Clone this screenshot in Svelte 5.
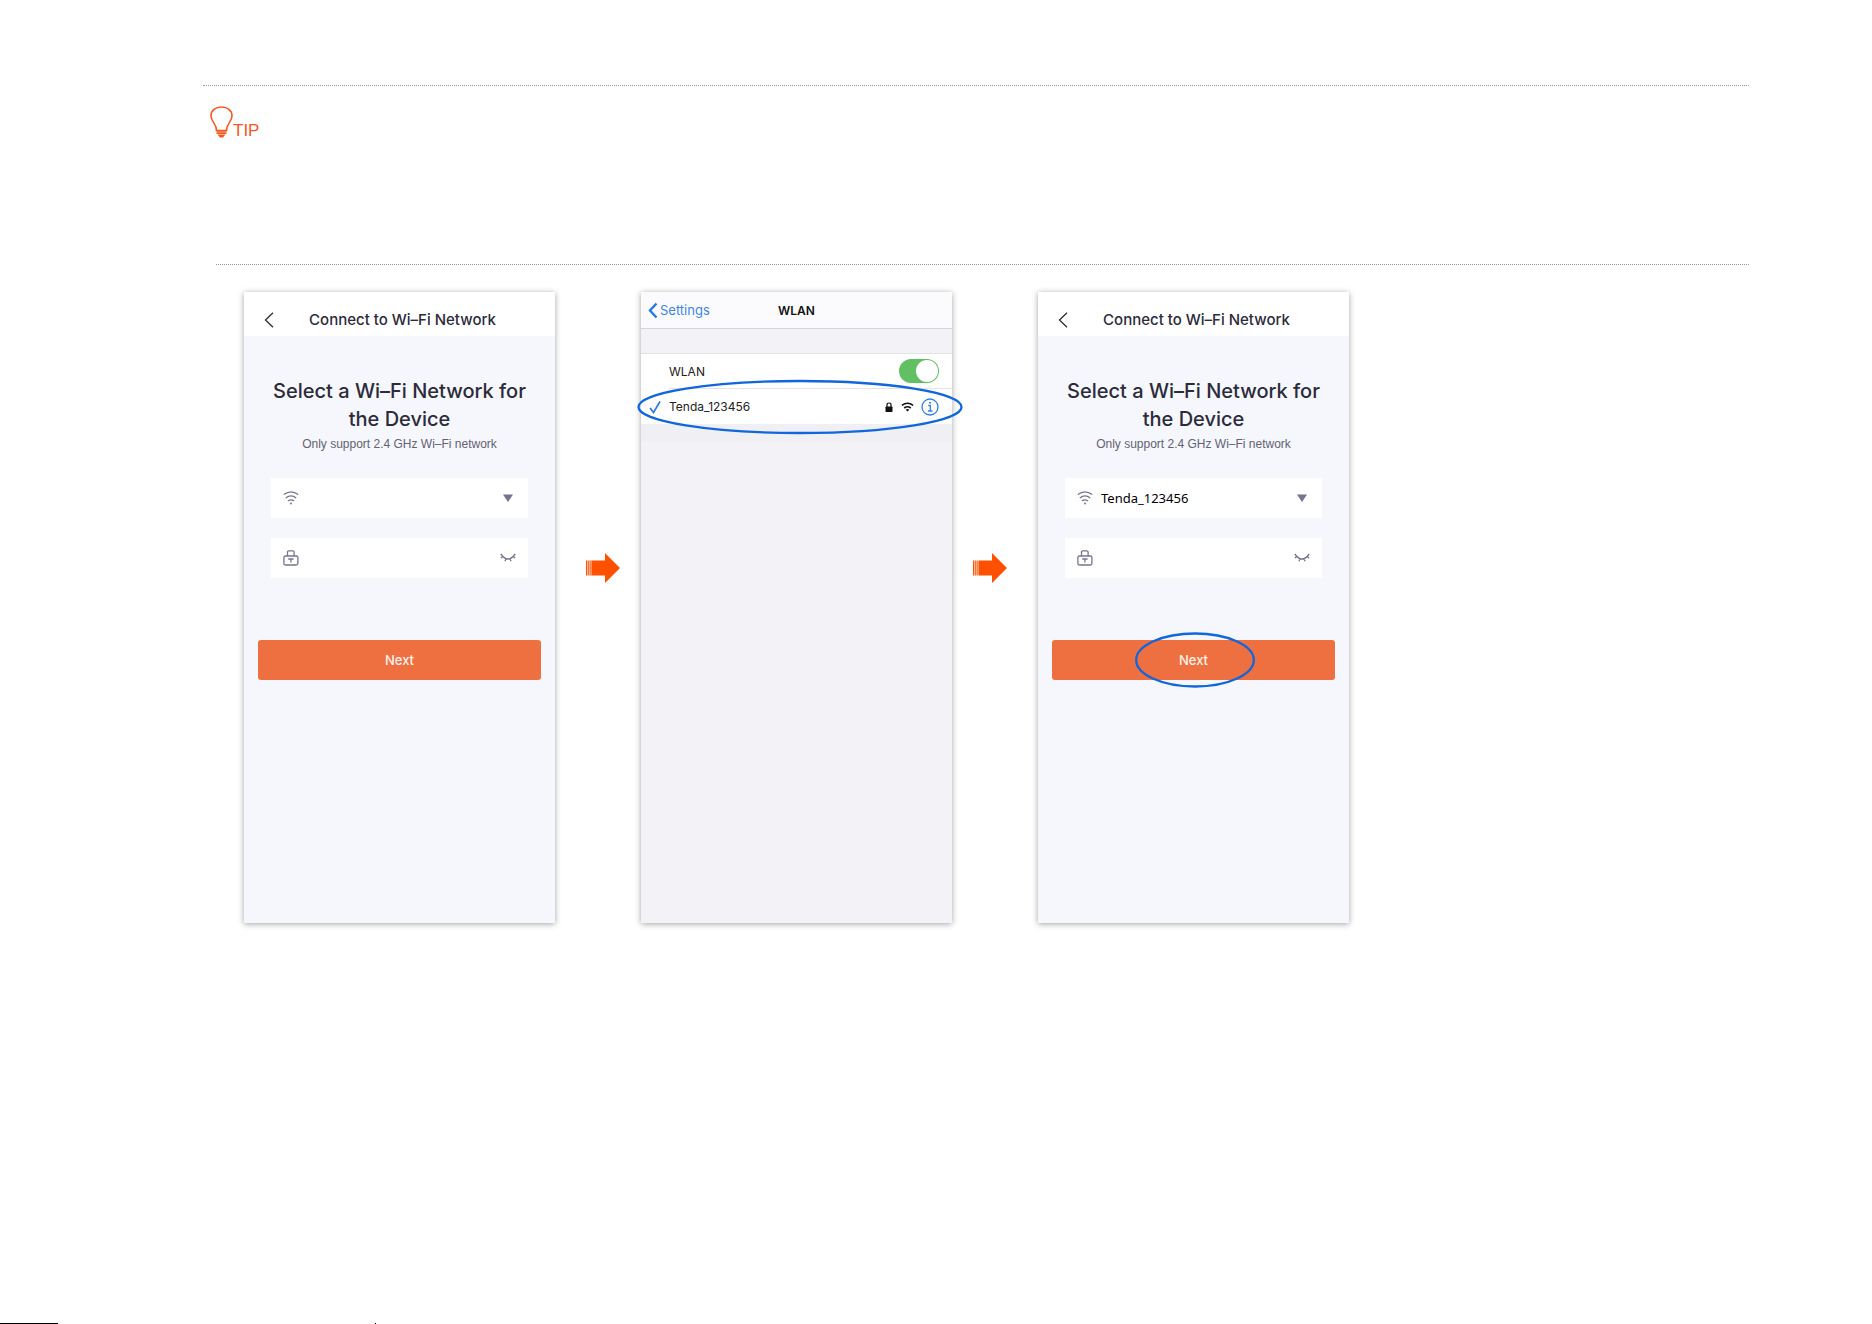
<script>
	let screens = [
		{ id: 'before', network: '', password: '', marked: false },
		{ id: 'after', network: 'Tenda_123456', password: '', marked: true }
	];
	let wlan = true;
	let connected = 'Tenda_123456';
</script>

{#snippet phone(screen)}
	<form class="phone" on:submit|preventDefault>
		<header class="bar">
			<button class="back" type="button" aria-label="Back">
				<svg width="10" height="16" viewBox="0 0 10 16"><path d="M9 .8 1.5 8 9 15.2" /></svg>
			</button>
			<h2>Connect to Wi–Fi Network</h2>
		</header>
		<h1>Select a Wi–Fi Network for the Device</h1>
		<p class="hint">Only support 2.4 GHz Wi–Fi network</p>

		<div class="field">
			<label for="network-{screen.id}" aria-label="Wi-Fi network">
				<svg class="line" width="16" height="16" viewBox="0 0 16 16">
					<path d="M.8 4.6Q8-.8 15.2 4.6M2.8 8Q8 3.6 13.2 8M5 11Q8 8.6 11 11" />
					<circle class="dot" cx="8" cy="13.6" r="1" />
				</svg>
			</label>
			<select id="network-{screen.id}" bind:value={screen.network}>
				<option value={screen.network}>{screen.network}</option>
			</select>
			<svg class="caret" width="10" height="8" viewBox="0 0 10 8"><path d="M0 .5h10L5 8z" /></svg>
		</div>

		<div class="field">
			<label for="password-{screen.id}" aria-label="Password">
				<svg class="line" width="16" height="16" viewBox="0 0 16 16">
					<rect x=".9" y="6" width="14" height="9" rx="1.5" />
					<path d="M4.5 6V2Q4.5.8 5.7.8h4.2q1.2 0 1.2 1.2v4M5.2 9h5.400M7.900 9v3.600" />
				</svg>
			</label>
			<input id="password-{screen.id}" type="password" bind:value={screen.password} />
			<button class="eye" type="button" aria-label="Show password">
				<svg class="line" width="16" height="10" viewBox="0 0 16 10">
					<path d="M.8 1Q8 11 15.2 1M2.8 3.6.8 5M5.9 5.8 5 8.2M10.1 5.8l.9 2.4M13.2 3.6l2 1.4" />
				</svg>
			</button>
		</div>

		<div class="action">
			<button class="next" type="submit">Next</button>
			{#if screen.marked}
				<svg class="mark next-mark" width="120" height="56" viewBox="0 0 120 56"><ellipse cx="60" cy="28" rx="58.8" ry="26.5" /></svg>
			{/if}
		</div>
	</form>
{/snippet}

{#snippet arrow()}
	<svg width="34" height="30" viewBox="0 0 34 30">
		<path d="M0 7.5h1v15H0zM1.600 7.500h1.200v15H1.600zM3.500 7.500h1.200v15H3.500zM5.400 7.500H19V0l15 15-15 15v-7.500H5.400z" />
	</svg>
{/snippet}

<main>
	<section class="tip">
		<svg width="23" height="32" viewBox="0 0 23 32">
			<path class="glass" d="M6.5 24.5C6.5 17.5 1 16 1 9.8 1 4.5 5.6 1 11.5 1S22 4.5 22 9.8c0 6.2-5.5 7.7-5.5 14.7z" />
			<path class="base" d="M6.5 24h10v1.8h-10zM6.500 26.200h10v1.800h-10zM7.500 28.400h8l-2.500 3.100h-3z" />
		</svg>
		<span>TIP</span>
	</section>

	<div class="steps">
		{@render phone(screens[0])}
		<div class="arrow to-end">{@render arrow()}</div>

		<section class="phone ios">
			<header class="nav">
				<a href="#settings">
					<svg width="10" height="17" viewBox="0 0 10 17"><path d="M8.5 1.5 2 8.5l6.500 7" /></svg>
					Settings
				</a>
				<h2>WLAN</h2>
			</header>
			<div class="list">
				<label class="row">
					<span>WLAN</span>
					<input class="switch" type="checkbox" bind:checked={wlan} />
				</label>
				<div class="row network">
					<svg class="check" width="12" height="14" viewBox="0 0 12 14"><path d="m1 8 3.500 4.500L11 1.500" /></svg>
					<span>{connected}</span>
					<svg class="lock" width="8" height="10" viewBox="0 0 8 10">
						<path class="shackle" d="M2 5V3q0-2 2-2t2 2v2" />
						<rect x=".5" y="4.5" width="7" height="5.5" rx=".8" />
					</svg>
					<svg class="wifi" width="13" height="10" viewBox="0 0 13 10">
						<path d="M.9 3.4Q6.500-1 12.100 3.400M3.200 6Q6.500 3.400 9.800 6" />
						<path class="tip-dot" d="m4.700 7.700 1.800 1.900 1.800-1.900q-1.800-1.400-3.600 0z" />
					</svg>
					<button class="info" type="button" aria-label="Network details">
						<svg width="18" height="18" viewBox="0 0 18 18">
							<circle cx="9" cy="9" r="8" />
							<path d="M7.300 7.500h2v5.500M7 13h4.500" />
							<circle class="dot" cx="9" cy="4.800" r="1" />
						</svg>
					</button>
					<svg class="mark row-mark" width="326" height="56" viewBox="0 0 326 56"><ellipse cx="163" cy="28" rx="161.5" ry="26" /></svg>
				</div>
			</div>
			<div class="strip"></div>
		</section>

		<div class="arrow">{@render arrow()}</div>
		{@render phone(screens[1])}
	</div>

	<footer><i class="rule"></i><i class="tick"></i></footer>
</main>

<style>
	:global(body) {
		margin: 0;
		background: #fff;
	}

	main {
		display: flex;
		flex-direction: column;
		box-sizing: border-box;
		min-height: 100vh;
		padding-top: 85px;
		font-family: Inter, sans-serif;
		color: #2b2b3a;
	}

	h1, h2, p {
		margin: 0;
	}

	button {
		padding: 0;
		border: none;
		background: none;
		font-family: inherit;
	}

	svg {
		display: block;
		flex: none;
		fill: none;
	}

	.tip {
		display: flex;
		align-items: flex-end;
		box-sizing: border-box;
		height: 53px;
		margin: 0 123px 0 203px;
		padding-left: 7px;
		border-top: 1px dotted #999;
		font: 17px/14px "Liberation Sans", sans-serif;
		color: #f8571f;
	}

	.glass {
		stroke: #f8571f;
		stroke-width: 1.6;
	}

	.base {
		fill: #f8571f;
	}

	.steps {
		display: grid;
		grid-template-columns: minmax(0, 1fr) 86px minmax(0, 1fr) 86px minmax(0, 1fr);
		max-width: 1105px;
		margin: 126px 123px 0 216px;
		padding: 28px 0 0 28px;
		position: relative;
	}

	.steps::before {
		content: '';
		position: absolute;
		top: 0;
		left: 0;
		width: calc(100vw - 339px);
		border-top: 1px dotted #999;
	}

	.phone {
		box-sizing: border-box;
		min-height: 631px;
		background: #f6f7fd;
		box-shadow: 0 1px 6px rgba(0, 0, 0, .36);
	}

	.bar {
		display: grid;
		grid-template-columns: 43px 1fr 37px;
		align-items: center;
		height: 44px;
		background: #fff;
	}

	.bar h2 {
		padding-top: 12px;
		font-size: 15px;
		line-height: 20px;
		font-weight: 500;
		text-align: center;
		white-space: nowrap;
	}

	.back {
		justify-self: center;
		padding: 12px 0 0 6px;
	}

	.back path {
		stroke: #2b2b3a;
		stroke-width: 1.3;
	}

	h1 {
		padding: 41px 20px 0;
		font-size: 20px;
		line-height: 28px;
		font-weight: 500;
		text-align: center;
	}

	.hint {
		padding: 3px 0 26px;
		font: 12px/16px "Liberation Sans", sans-serif;
		text-align: center;
		color: #626270;
	}

	.field {
		display: flex;
		align-items: center;
		gap: 8px;
		height: 40px;
		margin: 0 27px 20px;
		padding: 0 12px;
		box-sizing: border-box;
		background: #fff;
	}

	.field select,
	.field input {
		flex: 1;
		min-width: 0;
		height: 40px;
		padding: 0;
		border: none;
		outline: none;
		appearance: none;
		background: none;
		font: 13px "Noto Sans", sans-serif;
		color: #000;
	}

	.line {
		stroke: #77768e;
		stroke-width: 1.3;
	}

	.line .dot {
		fill: #77768e;
		stroke: none;
	}

	.caret {
		margin: 0 3px;
		fill: #74728e;
	}

	.action {
		position: relative;
		margin: 62px 14px 0;
	}

	.next {
		display: block;
		width: 100%;
		height: 40px;
		border-radius: 3px;
		background: #ee6f40;
		font-size: 13px;
		font-weight: 500;
		color: #fff2ec;
	}

	.mark {
		position: absolute;
		pointer-events: none;
		stroke: #1066dc;
		stroke-width: 2.3;
	}

	.next-mark {
		top: -8px;
		left: calc(50% - 59px);
	}

	.arrow {
		display: flex;
		padding: 261px 21px 0;
	}

	.to-end {
		justify-content: flex-end;
	}

	.arrow path {
		fill: #ff5000;
	}

	.ios {
		background: #f2f2f7;
	}

	.nav {
		display: grid;
		grid-template-columns: 1fr auto 1fr;
		align-items: center;
		height: 36px;
		border-bottom: 1px solid #d5d5d9;
		background: #fbfbfd;
	}

	.nav a {
		display: flex;
		align-items: center;
		gap: 2px;
		padding-left: 7px;
		font-size: 13px;
		text-decoration: none;
		color: #3c86e8;
	}

	.nav a path {
		stroke: #2478e8;
		stroke-width: 2.4;
	}

	.nav h2 {
		font-size: 12px;
		font-weight: 600;
		color: #111;
	}

	.list {
		margin-top: 24px;
		border-top: 1px solid #e2e2e6;
		background: #fff;
		color: #222;
	}

	.row {
		display: flex;
		align-items: center;
		height: 34px;
		margin-left: 28px;
		padding-right: 13px;
		font-size: 12px;
	}

	.row span {
		flex: 1;
	}

	.switch {
		width: 40px;
		height: 24px;
		margin: 0;
		padding: 1px;
		box-sizing: border-box;
		appearance: none;
		border-radius: 12px;
		background: #ccc;
	}

	.switch::before {
		content: '';
		display: block;
		width: 22px;
		height: 22px;
		border-radius: 50%;
		background: #fff;
	}

	.switch:checked {
		background: #62c064;
	}

	.switch:checked::before {
		margin-left: 16px;
	}

	.network {
		position: relative;
		height: 35px;
		border-top: 1px solid #e4e4e8;
	}

	.check {
		position: absolute;
		left: -20px;
		stroke: #2478e8;
		stroke-width: 1.6;
	}

	.lock {
		fill: #111;
	}

	.shackle {
		fill: none;
		stroke: #111;
		stroke-width: 1.2;
	}

	.wifi {
		margin: 0 7px 0 8px;
		stroke: #111;
		stroke-width: 1.6;
	}

	.tip-dot {
		fill: #111;
		stroke: none;
	}

	.info svg {
		stroke: #2f80e8;
		stroke-width: 1.3;
	}

	.info .dot {
		fill: #2f80e8;
		stroke: none;
	}

	.row-mark {
		top: -10px;
		left: -32px;
	}

	.strip {
		height: 18px;
		background: #efeff4;
	}

	footer {
		display: flex;
		justify-content: space-between;
		width: 376px;
		height: 1px;
		margin-top: auto;
	}

	.rule {
		width: 58px;
		background: #000;
	}

	.tick {
		width: 1px;
		background: #000;
	}
</style>
